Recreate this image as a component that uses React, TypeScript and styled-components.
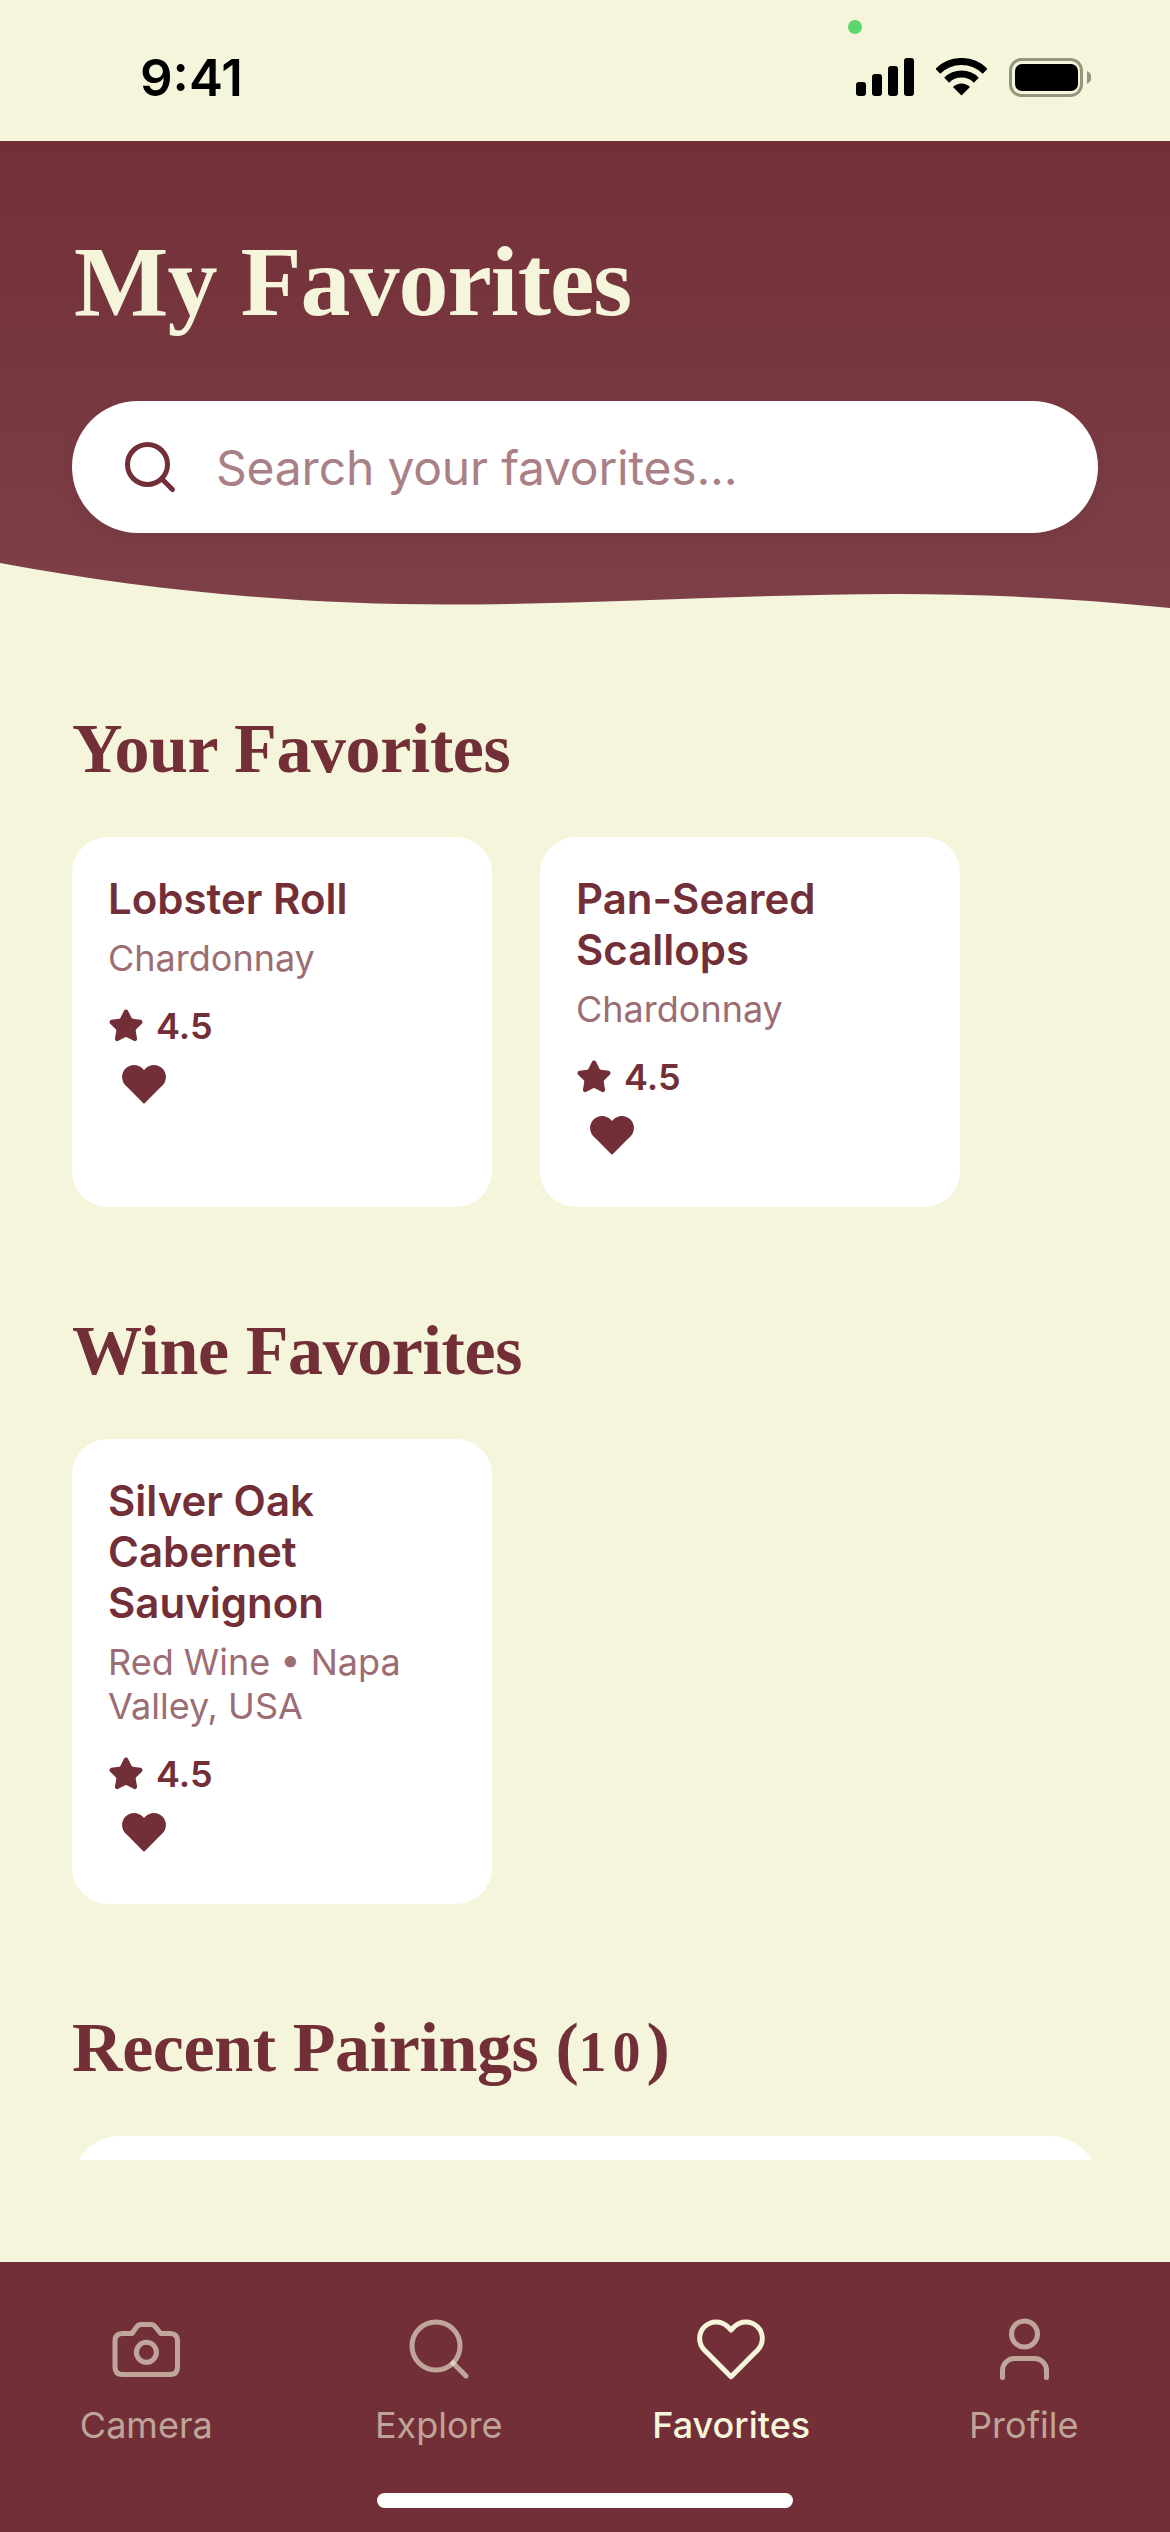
import { Search, Star } from "lucide-react";
import styled, { createGlobalStyle } from "styled-components";

const WINE = "#722F37";
const CREAM = "#F5F5DC";

const GlobalStyle = createGlobalStyle`
  * {
    box-sizing: border-box;
  }
  html,
  body {
    margin: 0;
    padding: 0;
    background: ${CREAM};
    font-family: Inter, "Noto Sans", sans-serif;
  }
`;

const Screen = styled.div`
  position: relative;
  width: 1170px;
  height: 2532px;
  display: flex;
  flex-direction: column;
  overflow: hidden;
  background: ${CREAM};
`;

const StatusBar = styled.div`
  position: relative;
  flex: none;
  height: 141px;
  display: flex;
  align-items: flex-start;
  justify-content: space-between;
  padding: 58px 79px 0 140px;
  background: ${CREAM};
`;

const Clock = styled.div`
  font-size: 51px;
  line-height: 39px;
  font-weight: 600;
  color: #000;
`;

const StatusIcons = styled.div`
  display: flex;
  align-items: flex-start;
  gap: 22px;
`;

const CameraDot = styled.span`
  position: absolute;
  left: 848px;
  top: 20px;
  width: 14px;
  height: 14px;
  border-radius: 50%;
  background: #5dd670;
`;

const Header = styled.header`
  position: relative;
  flex: none;
  padding: 81px 72px 75px;
  background: linear-gradient(180deg, ${WINE} 0%, #7e4048 100%);
`;

const PageTitle = styled.h1`
  margin: 0 0 59px 2px;
  font-family: "Liberation Serif", serif;
  font-size: 100px;
  line-height: 120px;
  font-weight: 700;
  letter-spacing: -1px;
  color: ${CREAM};
`;

const SearchBox = styled.div`
  display: flex;
  align-items: center;
  gap: 36px;
  height: 132px;
  padding-left: 48px;
  border-radius: 66px;
  background: #fff;
  color: ${WINE};
  box-shadow: 0 6px 18px rgba(0, 0, 0, 0.06);
`;

const SearchHint = styled.span`
  font-size: 48px;
  letter-spacing: -0.2px;
  color: #aa8087;
`;

const Wave = styled.svg`
  position: absolute;
  left: 0;
  bottom: 0;
  display: block;
`;

const Main = styled.main`
  flex: 1;
  min-height: 0;
  margin-bottom: 102px;
  padding: 99px 72px 0;
  overflow: hidden;
`;

const Section = styled.section`
  margin-bottom: 102px;
`;

const SectionTitle = styled.h2`
  margin: 0 0 46px;
  font-family: "Liberation Serif", serif;
  font-size: 70px;
  line-height: 84px;
  font-weight: 700;
  letter-spacing: -0.4px;
  color: ${WINE};
`;

// the original face has old-style figures, so the count sits lower and smaller
const OldStyle = styled.span`
  font-size: 0.8em;
  line-height: 1;
  letter-spacing: 6px;
`;

const CardRow = styled.div`
  display: flex;
  gap: 48px;
`;

const Card = styled.article`
  width: 420px;
  padding: 36px;
  border-radius: 36px;
  background: #fff;
`;

const CardTitle = styled.div`
  font-size: 42px;
  font-weight: 600;
  color: ${WINE};
`;

const CardMeta = styled.div`
  margin: 12px 0 24px;
  font-size: 36px;
  color: #9c6d73;
`;

const Rating = styled.div`
  display: flex;
  align-items: center;
  gap: 12px;
  font-size: 36px;
  font-weight: 600;
  color: ${WINE};
`;

const HeartButton = styled.button`
  display: block;
  padding: 12px;
  border: 0;
  background: none;
  color: ${WINE};
  svg {
    display: block;
  }
`;

const WideCard = styled.div`
  height: 400px;
  border-radius: 48px;
  background: #fff;
`;

const TabBar = styled.nav`
  flex: none;
  height: 270px;
  display: grid;
  grid-template-columns: repeat(4, 1fr);
  align-items: start;
  padding-top: 51px;
  background: ${WINE};
`;

const Tab = styled.div<{ $active?: boolean }>`
  display: flex;
  flex-direction: column;
  align-items: center;
  gap: 18px;
  font-size: 36px;
  font-weight: ${({ $active }) => ($active ? 500 : 400)};
  color: ${({ $active }) => ($active ? CREAM : "rgba(245, 245, 220, 0.6)")};
  svg {
    display: block;
  }
`;

const HomeIndicator = styled.span`
  position: absolute;
  left: 377px;
  bottom: 24px;
  width: 416px;
  height: 15px;
  border-radius: 8px;
  background: #fff;
`;

const HEART_PATH =
  "M20.84 4.61a5.5 5.5 0 0 0-7.78 0L12 5.67l-1.06-1.06a5.5 5.5 0 0 0-7.78 7.78l1.06 1.06L12 21.23l7.78-7.78 1.06-1.06a5.5 5.5 0 0 0 0-7.78z";

function Heart({ size, filled }: { size: number; filled?: boolean }) {
  return (
    <svg
      width={size}
      height={size}
      viewBox="0 0 24 24"
      fill={filled ? "currentColor" : "none"}
      stroke="currentColor"
      strokeWidth={filled ? 1 : 1.67}
      strokeLinecap="round"
      strokeLinejoin="round"
    >
      <path d={HEART_PATH} />
    </svg>
  );
}

function CameraIcon() {
  return (
    <svg
      width="72"
      height="72"
      viewBox="0 0 72 72"
      fill="none"
      stroke="currentColor"
      strokeWidth="5"
      strokeLinecap="round"
      strokeLinejoin="round"
    >
      <path d="M22 20.500L26.500 14Q28.500 11.500 31 11.500H41Q43.500 11.500 45.500 14L50.700 20.500H60Q67.500 20.500 67.500 28V54Q67.500 61.500 60 61.500H12.500Q5 61.500 5 54V28Q5 20.500 12.500 20.500Z" />
      <circle cx="36.400" cy="39.300" r="10" />
    </svg>
  );
}

function ProfileIcon() {
  return (
    <svg
      width="72"
      height="72"
      viewBox="0 0 72 72"
      fill="none"
      stroke="currentColor"
      strokeWidth="5"
      strokeLinecap="round"
      strokeLinejoin="round"
    >
      <circle cx="36.500" cy="21" r="13" />
      <path d="M14.500 64.500V57.500A12 12 0 0 1 26.500 45.500H46.500A12 12 0 0 1 58.500 57.500V64.500" />
    </svg>
  );
}

function SignalIcon() {
  return (
    <svg width="58" height="38" viewBox="0 0 58 38">
      <rect x="0" y="24" width="10" height="14" rx="3" />
      <rect x="16" y="16" width="10" height="22" rx="3" />
      <rect x="32" y="8" width="10" height="30" rx="3" />
      <rect x="48" y="0" width="10" height="38" rx="3" />
    </svg>
  );
}

function WifiIcon() {
  return (
    <svg width="51" height="38" viewBox="0 0 51 38">
      <path d="M1.800 13.300a33.500 33.500 0 0 1 47.400 0" fill="none" stroke="#000" strokeWidth="7" />
      <path d="M10.700 22.200a21 21 0 0 1 29.600 0" fill="none" stroke="#000" strokeWidth="7" />
      <path d="M25.500 37.500 17 29a12 12 0 0 1 17 0z" />
    </svg>
  );
}

function BatteryIcon() {
  return (
    <svg width="82" height="39" viewBox="0 0 82 39">
      <rect x="1.500" y="1.500" width="71" height="36" rx="11" fill="none" stroke="#96967f" strokeWidth="3" />
      <rect x="6" y="6" width="63" height="27" rx="7" />
      <path d="M78 13a7 7 0 0 1 0 13z" fill="#96967f" />
    </svg>
  );
}

type Favorite = { title: string; meta: string };

function FavoriteCard({ title, meta }: Favorite) {
  return (
    <Card>
      <CardTitle>{title}</CardTitle>
      <CardMeta>{meta}</CardMeta>
      <Rating>
        <Star size={36} fill="currentColor" strokeWidth={2} />
        4.5
      </Rating>
      <HeartButton>
        <Heart size={48} filled />
      </HeartButton>
    </Card>
  );
}

export default function App() {
  return (
    <Screen>
      <GlobalStyle />
      <StatusBar>
        <Clock>9:41</Clock>
        <CameraDot />
        <StatusIcons>
          <SignalIcon />
          <WifiIcon />
          <BatteryIcon />
        </StatusIcons>
      </StatusBar>

      <Header>
        <PageTitle>My Favorites</PageTitle>
        <SearchBox>
          <Search size={60} strokeWidth={2} />
          <SearchHint>Search your favorites...</SearchHint>
        </SearchBox>
        <Wave width="1170" height="50" viewBox="0 0 1170 50">
          <path
            d="M0 5C150 33 300 46.500 448 46.500C600 46.500 750 36 895 36C990 36 1080 41 1170 50L0 50Z"
            fill={CREAM}
          />
        </Wave>
      </Header>

      <Main>
        <Section>
          <SectionTitle>Your Favorites</SectionTitle>
          <CardRow>
            <FavoriteCard title="Lobster Roll" meta="Chardonnay" />
            <FavoriteCard title="Pan-Seared Scallops" meta="Chardonnay" />
          </CardRow>
        </Section>
        <Section>
          <SectionTitle>Wine Favorites</SectionTitle>
          <CardRow>
            <FavoriteCard
              title="Silver Oak Cabernet Sauvignon"
              meta="Red Wine • Napa Valley, USA"
            />
          </CardRow>
        </Section>
        <Section>
          <SectionTitle>
            Recent Pairings (<OldStyle>10</OldStyle>)
          </SectionTitle>
          <WideCard />
        </Section>
      </Main>

      <TabBar>
        <Tab>
          <CameraIcon />
          Camera
        </Tab>
        <Tab>
          <Search size={72} strokeWidth={1.67} />
          Explore
        </Tab>
        <Tab $active>
          <Heart size={72} />
          Favorites
        </Tab>
        <Tab>
          <ProfileIcon />
          Profile
        </Tab>
      </TabBar>
      <HomeIndicator />
    </Screen>
  );
}
